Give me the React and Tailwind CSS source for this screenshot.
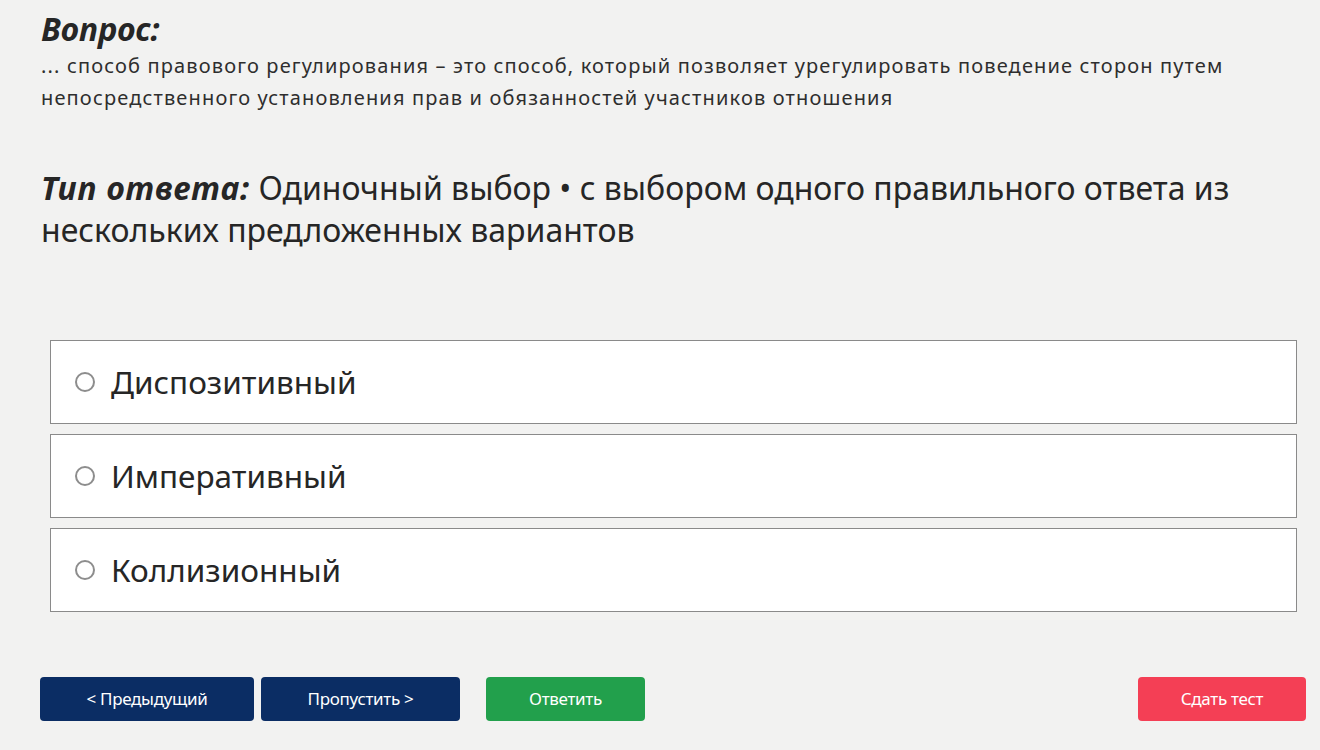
import { useState } from 'react';

const options = ['Диспозитивный', 'Императивный', 'Коллизионный'];

export default function App() {
  const [picked, setPicked] = useState(null);

  return (
    <div className="min-h-screen bg-[#f2f2f1] text-[#262626] font-['Noto_Sans',sans-serif]">
      <div className="pl-[41px] pr-6 pt-[8px]">
        <h2 className="text-[32px] leading-[42px] font-bold italic">Вопрос:</h2>
        <p className="text-[20px] leading-[32px] tracking-[1.15px] max-w-[1240px] text-[#2e2e2e]">
          ... способ правового регулирования – это способ, который позволяет урегулировать поведение сторон путем непосредственного установления прав и обязанностей участников отношения
        </p>

        <p className="mt-[53px] text-[32px] leading-[42px] max-w-[1230px]">
          <span className="font-bold italic tracking-[0.85px]">Тип ответа:</span> Одиночный выбор • с выбором одного правильного ответа из нескольких предложенных вариантов
        </p>
      </div>

      <div className="mt-[89px] ml-[50px] mr-[23px] flex flex-col gap-[10px]">
        {options.map((opt, i) => (
          <label
            key={opt}
            className="flex h-[84px] items-center gap-[16px] border-[1.5px] border-[#8a8a8a] bg-white pl-[24px] cursor-pointer"
          >
            <input
              type="radio"
              name="answer"
              checked={picked === i}
              onChange={() => setPicked(i)}
              className="h-[20px] w-[20px] appearance-none rounded-full border-2 border-[#8d8d8d] bg-white checked:border-[6px] checked:border-[#0a2d63]"
            />
            <span className="text-[31.5px] leading-none">{opt}</span>
          </label>
        ))}
      </div>

      <div className="mt-[65px] flex items-center pl-[40px] pr-[14px] text-[17px] tracking-[-0.3px]">
        <button className="h-[44px] w-[214px] rounded-[4px] bg-[#0b2d64] text-white">
          &lt; Предыдущий
        </button>
        <button className="ml-[7px] h-[44px] w-[199px] rounded-[4px] bg-[#0b2d64] text-white">
          Пропустить &gt;
        </button>
        <button className="ml-[26px] h-[44px] w-[159px] rounded-[4px] bg-[#22a04c] text-white">
          Ответить
        </button>
        <button className="ml-auto h-[44px] w-[168px] rounded-[4px] bg-[#f43f55] text-white">
          Сдать тест
        </button>
      </div>
    </div>
  );
}
